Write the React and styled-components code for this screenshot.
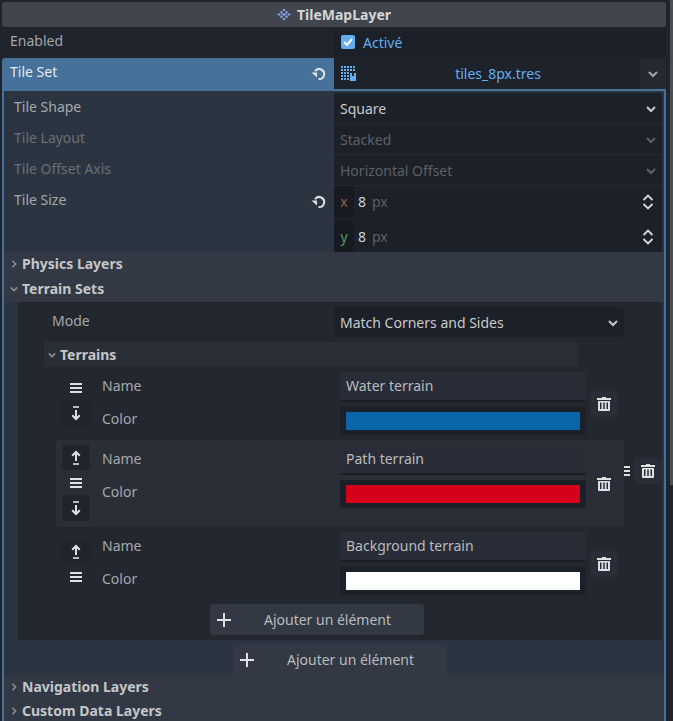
import React from 'react';
import styled, { createGlobalStyle } from 'styled-components';

const GlobalStyle = createGlobalStyle`
  html, body {
    margin: 0;
    padding: 0;
    background: #20242c;
  }
  body {
    font-family: "Noto Sans", sans-serif;
    font-size: 14px;
    color: #b9bbbf;
  }
`;

const Chevron = ({ dir = 'down', size = 10, color = '#c9cacc', width = 2 }) => (
  <svg width={size} height={size} viewBox="0 0 10 10" fill="none" stroke={color} strokeWidth={width}>
    {dir === 'down' ? <path d="M1 3l4 4 4-4" /> : <path d="M3 1l4 4-4 4" />}
  </svg>
);

const ResetIcon = () => (
  <svg width="16" height="16" viewBox="0 0 16 16" fill="none">
    <path d="M5 5.2A5 5 0 1 1 8.500 13" stroke="#e0e0e0" strokeWidth="2" />
    <path d="M1.500 6.500h5.500v5z" fill="#e0e0e0" />
  </svg>
);

const UpDownIcon = () => (
  <svg width="12" height="16" viewBox="0 0 12 16" fill="none" stroke="#d8d9da" strokeWidth="1.800">
    <path d="M1.500 6L6 1.500 10.500 6" />
    <path d="M1.500 10L6 14.500 10.500 10" />
  </svg>
);

const MenuIcon = () => (
  <svg width="12" height="10" viewBox="0 0 12 10" fill="#e0e0e0">
    <rect y="0" width="12" height="2" />
    <rect y="4" width="12" height="2" />
    <rect y="8" width="12" height="2" />
  </svg>
);

const ArrowIcon = ({ up }) => (
  <svg width="10" height="15" viewBox="0 0 10 15" fill="none" stroke="#e0e0e0" strokeWidth="2">
    {up ? (
      <>
        <path d="M5 2v9M1.200 5.800L5 2l3.800 3.800" />
        <path d="M2 14h6" strokeWidth="1.600" />
      </>
    ) : (
      <>
        <path d="M2 1h6" strokeWidth="1.600" />
        <path d="M5 4v9M1.200 9.200L5 13l3.800-3.800" />
      </>
    )}
  </svg>
);

const TrashIcon = () => (
  <svg width="14" height="14" viewBox="0 0 14 14" fill="#e0e0e0">
    <path d="M5 0h4v1h5v2H0V1h5z" />
    <path d="M1 4h12v9a1 1 0 0 1-1 1H2a1 1 0 0 1-1-1zM3 5.500v6.500h1.500V5.500zM6.250 5.500v6.500h1.500V5.500zM9.500 5.500v6.500h1.500V5.500z" fillRule="evenodd" />
  </svg>
);

const PlusIcon = () => (
  <svg width="14" height="14" viewBox="0 0 14 14" fill="#e0e0e0">
    <rect x="6" width="2" height="14" />
    <rect y="6" width="14" height="2" />
  </svg>
);

const nodeDots = [-2, -1, 0, 1, 2].flatMap((r) => {
  const count = 3 - Math.abs(r);
  return Array.from({ length: count }, (_, i) => [7 + (i - (count - 1) / 2) * 5, 5.500 + r * 2.300]);
});

const NodeIcon = () => (
  <svg width="14" height="11" viewBox="0 0 14 11" fill="#8da5f3">
    {nodeDots.map(([x, y]) => (
      <rect key={`${x}-${y}`} x={x - 1.100} y={y - 1} width="2.200" height="2" />
    ))}
    <rect x="3.500" y="4.500" width="7" height="2" opacity="0.500" />
  </svg>
);

const TilesIcon = () => (
  <svg width="15" height="15" viewBox="0 0 15 15" fill="#62aef0">
    {[0, 3, 6, 9, 12].flatMap((x) => [0, 3, 6, 9, 12].map((y) => (
      x >= 9 && y >= 6 ? null : <rect key={`${x}-${y}`} x={x} y={y} width="2" height="2" />
    )))}
    <path d="M9 7h2v3h2V7h2v8H9z" />
  </svg>
);

const Page = styled.div`
  width: 673px;
  height: 721px;
  overflow: hidden;
  position: relative;
  padding: 2px 7px 0 2px;
  box-sizing: border-box;
`;

const Title = styled.div`
  height: 25px;
  background: #41454e;
  border-radius: 3px;
  display: flex;
  align-items: center;
  justify-content: center;
  gap: 6px;
  font-weight: 700;
  color: #d5d6d8;
  margin-bottom: 2px;
`;

const ScrollThumb = styled.div`
  position: absolute;
  top: 0;
  right: 0;
  width: 3px;
  height: 485px;
  background: #4a4e55;
`;

const Row = styled.div`
  display: grid;
  grid-template-columns: ${(p) => p.$cols || '332px 1fr'};
  height: ${(p) => p.$h || 31}px;
`;

const Label = styled.div`
  display: flex;
  justify-content: space-between;
  padding: ${(p) => p.$top ?? 2}px 8px 0 ${(p) => p.$indent || 8}px;
  line-height: 20px;
  color: ${(p) => (p.$off ? '#6a6e75' : p.$on ? '#e8ebef' : '#a5a7ab')};
  background: ${(p) => (p.$on ? '#46719a' : 'transparent')};
  border-radius: ${(p) => (p.$on ? '3px 0 0 0' : '0')};
`;

const ResetBox = styled.span`
  display: flex;
  align-items: center;
  height: 24px;
`;

const CheckField = styled.div`
  background: #1c2028;
  display: flex;
  align-items: center;
  gap: 8px;
  padding: 0 0 3px 7px;
  color: #62aef0;
  border-radius: 0 0 2px 2px;
`;

const CheckBox = styled.span`
  width: 14px;
  height: 14px;
  border-radius: 2px;
  background: #62aef0;
  display: flex;
  align-items: center;
  justify-content: center;
`;

const PickerField = styled.div`
  display: grid;
  grid-template-columns: 306px 1fr;
  background: #1e232b;
`;

const PickerMain = styled.div`
  display: flex;
  align-items: center;
  padding-left: 7px;
  color: #62aef0;
`;

const PickerName = styled.span`
  flex: 1;
  text-align: center;
`;

const PickerArrow = styled.div`
  display: flex;
  align-items: center;
  justify-content: center;
  background: #252a32;
`;

const SubPanel = styled.div`
  border: 2px solid #46719a;
  border-bottom: none;
  background: #2b3542;
  padding-top: 2px;
`;

const Select = styled.div`
  background: #1c2028;
  display: flex;
  align-items: center;
  justify-content: space-between;
  padding: 0 6px;
  color: ${(p) => (p.$off ? '#5d6066' : '#c9cacc')};
  border-radius: 2px;
  box-shadow: inset 0 -1px 0 #262b33;
  margin-right: ${(p) => p.$gap ?? 2}px;
`;

const SpinCell = styled.div`
  background: #1c2028;
  margin-right: 2px;
`;

const SpinField = styled.div`
  height: 31px;
  display: flex;
  align-items: center;
  padding-right: 8px;
`;

const Axis = styled.span`
  width: 20px;
  height: 31px;
  background: #171a20;
  border-radius: 3px;
  display: flex;
  align-items: center;
  justify-content: center;
  color: ${(p) => p.$color};
  margin-right: 4px;
`;

const SpinValue = styled.span`
  color: #d0d1d3;
  margin-right: 6px;
`;

const SpinUnit = styled.span`
  color: #5d6066;
  flex: 1;
`;

const SectionHead = styled.div`
  display: flex;
  align-items: center;
  height: ${(p) => p.$h || 25}px;
  gap: 4px;
  padding-left: ${(p) => p.$indent || 6}px;
  font-weight: 700;
  color: #c4c6ca;
  background: ${(p) => p.$bg || '#323844'};
`;

const Band = styled.div`
  padding: 0 2px 0 14px;
`;

const TerrainSets = styled.div`
  background: #23272f;
  padding: 5px 0;
`;

const SetRow = styled.div`
  display: grid;
  grid-template-columns: 26px minmax(0, 1fr) 38px;
`;

const HandleCell = styled.div`
  grid-row: 1 / 3;
  display: flex;
  align-items: center;
  justify-content: center;
  padding-left: ${(p) => p.$nudge || 0}px;
`;

const SetBody = styled.div`
  grid-column: 2;
  grid-row: 1;
`;

const ModeRow = styled.div`
  display: grid;
  grid-template-columns: 290px 290px;
  height: 31px;
  margin-bottom: 4px;
`;

const ModeLabel = styled.div`
  padding: 4px 0 0 8px;
  color: #a5a7ab;
`;

const Terrain = styled.div`
  display: grid;
  grid-template-columns: 40px 244px 246px 38px;
  margin-left: 12px;
  width: 568px;
  padding: 5px 0;
  background: ${(p) => (p.$alt ? '#2a2e37' : 'transparent')};
`;

const Handles = styled.div`
  display: flex;
  flex-direction: column;
  align-items: flex-start;
  padding: ${(p) => p.$top}px 0 ${(p) => (p.$alt ? 1 : 0)}px 6px;
`;

const HandleBtn = styled.div`
  width: 28px;
  height: ${(p) => (p.$tall ? 26 : 25)}px;
  display: flex;
  align-items: center;
  justify-content: center;
  border-radius: 3px;
  background: ${(p) => (p.$dark ? '#20242c' : 'transparent')};
`;

const TerrainLabels = styled.div`
  padding: 4px 0 0 6px;
  color: #a5a7ab;
  display: flex;
  flex-direction: column;
  gap: 13px;
  line-height: 20px;
`;

const Fields = styled.div`
  display: flex;
  flex-direction: column;
  gap: 5px;
`;

const NameField = styled.div`
  height: 30px;
  box-sizing: border-box;
  background: #282d37;
  border-bottom: 2px solid #1c2028;
  padding-left: 6px;
  line-height: 28px;
  color: #b9bbbf;
`;

const ColorField = styled.div`
  height: 28px;
  background: #1c2028;
  border-radius: 2px;
  padding: 5px 6px;
  box-sizing: border-box;
`;

const Swatch = styled.div`
  height: 18px;
  background: ${(p) => p.$color};
`;

const TrashBtn = styled.div`
  width: 28px;
  height: 26px;
  border-radius: 3px;
  background: #282d37;
  display: flex;
  align-items: center;
  justify-content: center;
  align-self: center;
  margin-left: 4px;
`;

const AddRow = styled.div`
  grid-column: 1 / -1;
  grid-row: 2;
  display: flex;
  justify-content: center;
  padding-top: 4px;
`;

const AddButton = styled.div`
  width: 214px;
  height: 31px;
  background: #323844;
  border-radius: 3px;
  display: flex;
  align-items: center;
  padding-left: 7px;
  box-sizing: border-box;
  color: #b9bbbf;
`;

const AddText = styled.span`
  flex: 1;
  text-align: center;
`;

const terrains = [
  { name: 'Water terrain', color: '#0a66a8', up: false, down: true, top: 3 },
  { name: 'Path terrain', color: '#d5001a', up: true, down: true, alt: true, top: 0 },
  { name: 'Background terrain', color: '#ffffff', up: true, down: false, top: 7 },
];

const TerrainItem = ({ item }) => (
  <Terrain $alt={item.alt}>
    <Handles $top={item.top} $alt={item.alt}>
      {item.up && <HandleBtn $dark><ArrowIcon up /></HandleBtn>}
      <HandleBtn><MenuIcon /></HandleBtn>
      {item.down && <HandleBtn $dark $tall><ArrowIcon /></HandleBtn>}
    </Handles>
    <TerrainLabels>
      <span>Name</span>
      <span>Color</span>
    </TerrainLabels>
    <Fields>
      <NameField>{item.name}</NameField>
      <ColorField><Swatch $color={item.color} /></ColorField>
    </Fields>
    <TrashBtn><TrashIcon /></TrashBtn>
  </Terrain>
);

const CollapsedHead = ({ children, h }) => (
  <SectionHead $h={h}><Chevron dir="right" color="#8a8d93" size={8} />{children}</SectionHead>
);

const AddElement = () => (
  <AddRow>
    <AddButton><PlusIcon /><AddText>Ajouter un élément</AddText></AddButton>
  </AddRow>
);

export default function App() {
  return (
    <Page>
      <GlobalStyle />
      <ScrollThumb />
      <Title><NodeIcon />TileMapLayer</Title>
      <Row $h={29}>
        <Label>Enabled</Label>
        <CheckField>
          <CheckBox>
            <svg width="10" height="10" viewBox="0 0 10 10" fill="none" stroke="#fff" strokeWidth="2">
              <path d="M1 5l3 3 5-6" />
            </svg>
          </CheckBox>
          Activé
        </CheckField>
      </Row>
      <Row>
        <Label $on $top={4}>
          Tile Set
          <ResetBox><ResetIcon /></ResetBox>
        </Label>
        <PickerField>
          <PickerMain>
            <TilesIcon />
            <PickerName>tiles_8px.tres</PickerName>
          </PickerMain>
          <PickerArrow><Chevron color="#a5a7ab" /></PickerArrow>
        </PickerField>
      </Row>
      <SubPanel>
        <Row $cols="330px 1fr">
          <Label $indent={10} $top={4}>Tile Shape</Label>
          <Select>Square<Chevron /></Select>
        </Row>
        <Row $cols="330px 1fr">
          <Label $indent={10} $top={4} $off>Tile Layout</Label>
          <Select $off>Stacked<Chevron color="#5d6066" /></Select>
        </Row>
        <Row $cols="330px 1fr">
          <Label $indent={10} $top={4} $off>Tile Offset Axis</Label>
          <Select $off>Horizontal Offset<Chevron color="#5d6066" /></Select>
        </Row>
        <Row $cols="330px 1fr" $h={35}>
          <Label $indent={10} $top={4}>
            Tile Size
            <ResetBox><ResetIcon /></ResetBox>
          </Label>
          <SpinCell>
            <SpinField>
              <Axis $color="#9a5a4c">x</Axis>
              <SpinValue>8</SpinValue>
              <SpinUnit>px</SpinUnit>
              <UpDownIcon />
            </SpinField>
          </SpinCell>
        </Row>
        <Row $cols="330px 1fr">
          <Label />
          <SpinCell>
            <SpinField>
              <Axis $color="#4f9a64">y</Axis>
              <SpinValue>8</SpinValue>
              <SpinUnit>px</SpinUnit>
              <UpDownIcon />
            </SpinField>
          </SpinCell>
        </Row>
        <CollapsedHead h={23}>Physics Layers</CollapsedHead>
        <SectionHead $h={27}><Chevron color="#8a8d93" size={8} />Terrain Sets</SectionHead>
        <Band>
          <TerrainSets>
            <SetRow>
              <HandleCell $nudge={2}><MenuIcon /></HandleCell>
              <SetBody>
                <ModeRow>
                  <ModeLabel>Mode</ModeLabel>
                  <Select $gap={0}>Match Corners and Sides<Chevron /></Select>
                </ModeRow>
                <SectionHead $bg="#2a2e37" $indent={4}><Chevron color="#8a8d93" size={8} />Terrains</SectionHead>
                {terrains.map((t) => <TerrainItem key={t.name} item={t} />)}
              </SetBody>
              <HandleCell><TrashBtn><TrashIcon /></TrashBtn></HandleCell>
              <AddElement />
            </SetRow>
          </TerrainSets>
          <AddElement />
        </Band>
        <CollapsedHead h={23}>Navigation Layers</CollapsedHead>
        <CollapsedHead>Custom Data Layers</CollapsedHead>
      </SubPanel>
    </Page>
  );
}
